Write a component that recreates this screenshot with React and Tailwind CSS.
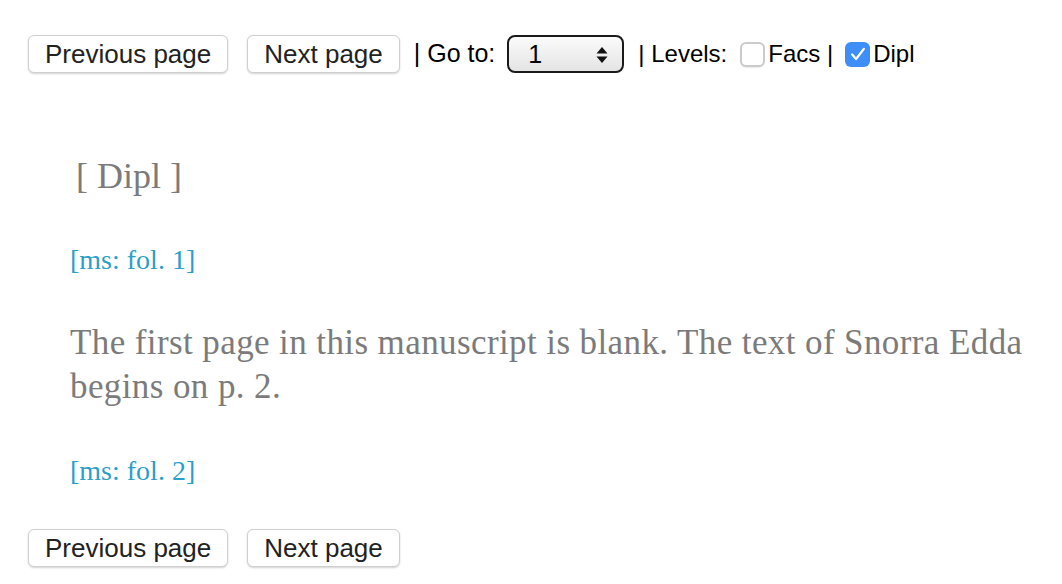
import React from 'react';

const sans = { fontFamily: '"Liberation Sans", Arial, sans-serif' };

const PageButton = ({ children }) => (
  <button
    type="button"
    className="h-[38px] px-[16px] rounded-[6px] border border-[#d0d0d0] bg-white text-[26px] text-[#222] shadow-[0_1px_2px_rgba(0,0,0,0.18)] leading-none font-['Liberation_Sans',Arial,sans-serif]"
  >
    {children}
  </button>
);

const Box = ({ checked }) =>
  checked ? (
    <span className="inline-flex items-center justify-center w-[25px] h-[25px] rounded-[6px] bg-[#3d8ef7]">
      <svg width="18" height="18" viewBox="0 0 16 16" fill="none">
        <path d="M2.8 8.4 L6.3 12.4 L13.2 3.4" stroke="white" strokeWidth="2" strokeLinecap="round" strokeLinejoin="round" />
      </svg>
    </span>
  ) : (
    <span className="inline-block w-[25px] h-[25px] rounded-[6px] border-2 border-[#cbcbcb] bg-white shadow-[0_1px_1px_rgba(0,0,0,0.08)]" />
  );

const Toolbar = ({ full }) => (
  <div className="flex items-center text-[25px] text-black font-['Liberation_Sans',Arial,sans-serif]">
    <PageButton>Previous page</PageButton>
    <div className="w-[19px]" />
    <PageButton>Next page</PageButton>
    {full && (
      <>
        <span className="ml-[14px]">| Go to:</span>
        <div className="ml-[12px] relative w-[117px] h-[38px] rounded-[8px] border-2 border-[#1a1a1a] bg-gradient-to-b from-[#fbfbfb] to-[#e4e4e4] flex items-center pl-[19px]">
          <span className="text-[25px] leading-none">1</span>
          <svg className="absolute right-[14px] top-[9px]" width="12" height="18" viewBox="0 0 12 18">
            <path d="M6 1 L11.5 7.5 L0.5 7.5 Z" fill="#111" />
            <path d="M6 17 L11.5 10.5 L0.5 10.5 Z" fill="#111" />
          </svg>
        </div>
        <div className="ml-[14px] flex items-center text-[24px]">
          <span>| Levels:</span>
          <span className="ml-[13px] flex"><Box /></span>
          <span className="ml-[3px]">Facs |</span>
          <span className="ml-[12px] flex"><Box checked /></span>
          <span className="ml-[3px]">Dipl</span>
        </div>
      </>
    )}
  </div>
);

export default function App() {
  return (
    <div className="w-[1062px] min-h-[584px] bg-white pt-[35px] pl-[28px]" style={sans}>
      <Toolbar full />
      <div className="pl-[42px] pr-[20px] text-[#7b7b7b] font-['Liberation_Serif','Times_New_Roman',serif]">
        <p className="mt-[83px] text-[36px] leading-[40px] pl-[6px]">[ Dipl ]</p>
        <p className="mt-[48px] text-[28px] leading-[32px] text-[#2a9fc8]">[ms: fol. 1]</p>
        <p className="mt-[45px] text-[35px] leading-[44px] tracking-[0.4px]">
          The first page in this manuscript is blank. The text of Snorra Edda begins on p. 2.
        </p>
        <p className="mt-[46px] text-[28px] leading-[32px] text-[#2a9fc8]">[ms: fol. 2]</p>
      </div>
      <div className="mt-[42px]">
        <Toolbar />
      </div>
    </div>
  );
}
